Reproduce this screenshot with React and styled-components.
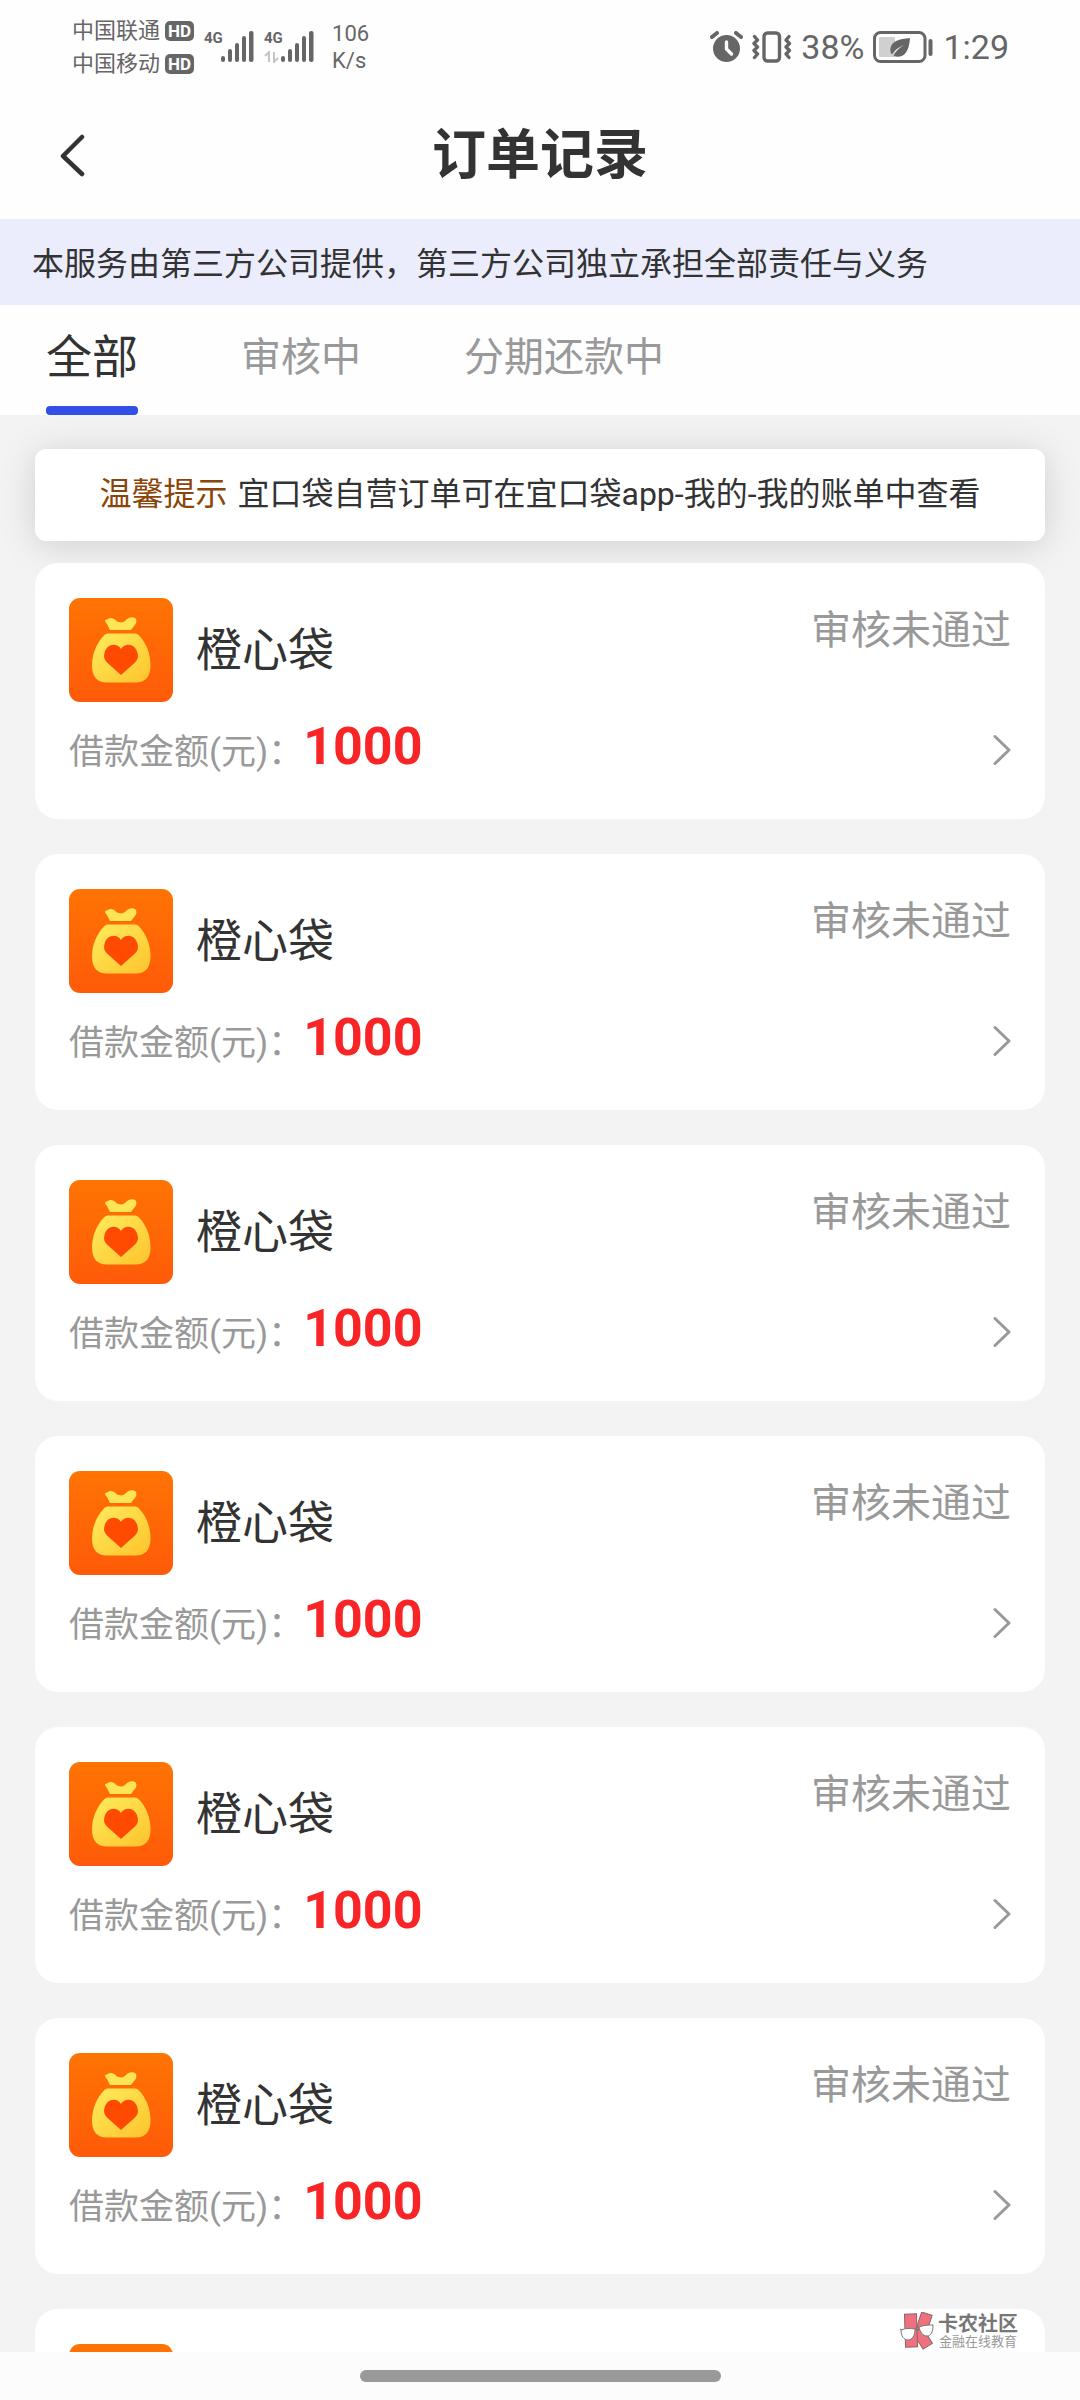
import React, { useState } from "react";
import styled, { createGlobalStyle } from "styled-components";

const color = {
    text: "#333333",
    muted: "#999999",
    system: "#666666",
    page: "#f3f3f3",
    notice: "#ebedfd",
    accent: "#3350e6",
    amount: "#f92426",
    tip: "#8a4508",
};

const size = {
    xs: "13px",
    s: "22px",
    m: "32px",
    label: "35px",
    l: "40px",
    xl: "46px",
    amount: "52px",
    title: "54px",
};

const GlobalStyle = createGlobalStyle`
    * {
        box-sizing: border-box;
    }
    body {
        margin: 0;
        background-color: ${color.page};
        color: ${color.text};
        font-family: Roboto, "Noto Sans CJK SC", sans-serif;
    }
    button {
        padding: 0;
        border: none;
        background: none;
        font-family: inherit;
        cursor: pointer;
    }
`;

const Screen = styled.div`
    position: relative;
    display: flex;
    flex-direction: column;
    height: 100vh;
`;

const Top = styled.div`
    background-color: #fefefe;
`;

const StatusBar = styled.div`
    display: flex;
    justify-content: space-between;
    align-items: center;
    height: 92px;
    padding: 2px 71px 0 72px;
    color: ${color.system};
`;

const StatusGroup = styled.div`
    display: flex;
    align-items: center;
    gap: ${(props) => props.$gap}px;
`;

const Carriers = styled.div`
    display: flex;
    flex-direction: column;
`;

const Carrier = styled.div`
    display: flex;
    align-items: center;
    gap: 5px;
    font-size: ${size.s};
    line-height: 33px;
`;

const HdBadge = styled.span`
    width: 29px;
    height: 20px;
    border-radius: 5px;
    background-color: ${color.system};
    color: #fff;
    font-size: 17px;
    font-weight: 700;
    line-height: 20px;
    text-align: center;
`;

const SignalBox = styled.div`
    display: flex;
    height: 32px;
`;

const SignalLabel = styled.div`
    display: flex;
    flex-direction: column;
    justify-content: space-between;
    width: 17px;
    font-size: 15px;
    font-weight: 700;
    line-height: 14px;
`;

const Speed = styled.div`
    margin-left: 8px;
    font-size: ${size.s};
    line-height: 27px;
`;

const Clock = styled.span`
    font-size: 34px;
    line-height: 40px;
`;

const TitleBar = styled.header`
    display: grid;
    grid-template-columns: 92px 1fr 92px;
    align-items: center;
    height: 127px;
`;

const BackButton = styled.button`
    display: flex;
    justify-content: flex-end;
    padding-right: 6px;
`;

const Title = styled.h1`
    margin: 0;
    font-size: ${size.title};
    line-height: 72px;
    font-weight: 700;
    text-align: center;
`;

const Notice = styled.p`
    margin: 0;
    padding: 23px 32px 19px;
    background-color: ${color.notice};
    font-size: ${size.m};
    line-height: 44px;
    white-space: nowrap;
`;

const Tabs = styled.nav`
    display: flex;
    gap: 103px;
    padding: 0 46px;
`;

const Tab = styled.button`
    padding-top: 4px;
    color: ${(props) => (props.$active ? color.text : color.muted)};
    font-size: ${(props) => (props.$active ? size.xl : size.l)};
    line-height: 97px;

    &::after {
        content: "";
        display: block;
        height: 9px;
        border-radius: 4px;
        background-color: ${(props) => (props.$active ? color.accent : "transparent")};
    }
`;

const List = styled.main`
    flex: 1;
    min-height: 0;
    overflow-y: auto;
    scrollbar-width: none;
    padding: 34px 35px 0;
`;

const Tip = styled.p`
    display: flex;
    justify-content: center;
    gap: 10px;
    margin: 0 0 22px;
    padding: 23px 0 25px;
    border-radius: 11px;
    background-color: #fff;
    box-shadow: 0 4px 36px rgba(0, 0, 0, 0.15);
    font-size: ${size.m};
    line-height: 44px;
    white-space: nowrap;
`;

const TipLabel = styled.span`
    color: ${color.tip};
`;

const Orders = styled.div`
    display: flex;
    flex-direction: column;
    gap: 35px;
    position: relative;
`;

const Card = styled.a`
    display: block;
    padding: 35px 34px 39px;
    border-radius: 23px;
    background-color: #fff;
    color: ${color.text};
    text-decoration: none;
`;

const CardHead = styled.div`
    display: flex;
    align-items: center;
    gap: 23px;
    margin-bottom: 18px;
`;

const Name = styled.span`
    flex: 1;
    font-size: ${size.xl};
    line-height: 64px;
`;

const State = styled.span`
    align-self: flex-start;
    color: ${color.muted};
    font-size: ${size.l};
    line-height: 66px;
`;

const CardFoot = styled.div`
    display: flex;
    justify-content: space-between;
    align-items: center;
    height: 60px;
`;

const AmountLine = styled.div`
    display: flex;
    align-items: baseline;
    line-height: 60px;
`;

const AmountLabel = styled.span`
    color: ${color.muted};
    font-size: ${size.label};
`;

const Amount = styled.strong`
    color: ${color.amount};
    font-size: ${size.amount};
    font-weight: 700;
`;

const GestureBar = styled.div`
    display: flex;
    justify-content: center;
    align-items: center;
    height: 48px;
    background-color: #fcfcfc;
`;

const Pill = styled.div`
    width: 361px;
    height: 12px;
    border-radius: 6px;
    background-color: #999;
`;

const Watermark = styled.div`
    position: absolute;
    right: 62px;
    bottom: 50px;
    display: flex;
    align-items: center;
    gap: 3px;
    color: #777;
`;

const WatermarkText = styled.div`
    display: flex;
    flex-direction: column;
    font-size: 20px;
    font-weight: 700;
    line-height: 22px;
`;

const WatermarkSub = styled.small`
    color: ${color.muted};
    font-size: ${size.xs};
    font-weight: 400;
    line-height: 14px;
    text-align: center;
`;

const Signal = ({ data }) => (
    <SignalBox>
        <SignalLabel>
            4G
            {data && (
                <svg width="16" height="12" viewBox="0 0 16 12" fill="none" stroke="#c4c4c4" strokeWidth="2">
                    <path d="M1 5l4-4v10M10 1v10l4-4" />
                </svg>
            )}
        </SignalLabel>
        <svg width="33" height="31" viewBox="0 0 33 31" fill={color.system}>
            <rect x="0" y="25" width="4" height="6" rx="2" />
            <rect x="7" y="18" width="4" height="13" rx="2" />
            <rect x="14" y="12" width="4" height="19" rx="2" />
            <rect x="21" y="5" width="4" height="26" rx="2" />
            <rect x="28" y="0" width="4.5" height="31" rx="2" />
        </svg>
    </SignalBox>
);

const AlarmIcon = () => (
    <svg width="33" height="32" viewBox="0 0 33 32" fill="none" strokeLinecap="round">
        <circle cx="16.5" cy="17.5" r="13.5" fill={color.system} />
        <path d="M2 6l5-4M31 6l-5-4" stroke={color.system} strokeWidth="4" />
        <path d="M16.5 11v7l5 5" stroke="#fff" strokeWidth="3.4" strokeLinejoin="round" />
    </svg>
);

const VibrateIcon = () => (
    <svg width="40" height="32" viewBox="0 0 40 32" fill="none" stroke={color.system} strokeLinecap="round" strokeLinejoin="round">
        <rect x="12" y="2" width="15.5" height="28" rx="3.5" strokeWidth="3.4" />
        <path d="M2.5 5.500l3 3.500-3.500 3.500 3.500 3.500-3.500 3.500 3.500 3.500-3 3.500" strokeWidth="3.400" />
        <path d="M37 5.500l-3 3.500 3.500 3.500-3.500 3.500 3.500 3.500-3.500 3.500 3 3.500" strokeWidth="3.400" />
    </svg>
);

const BatteryIcon = () => (
    <svg width="61" height="32" viewBox="0 0 61 32">
        <rect x="1.500" y="1.500" width="50.500" height="29" rx="6" fill="none" stroke={color.system} strokeWidth="3" />
        <rect x="6" y="6" width="16" height="20" rx="1" fill="#d0d0d0" />
        <path d="M37 7c-11 1-18 3-19.500 10-.6 3 .2 5 1.500 6.500 3-5 7-7.500 12-9.500-5 3-8.500 6-10.500 11 8 2.500 15.500-1 16.500-18z" fill={color.system} />
        <rect x="55.500" y="8" width="4" height="17" rx="2" fill={color.system} />
    </svg>
);

const BackIcon = () => (
    <svg width="26" height="46" viewBox="0 0 26 46" fill="none" stroke={color.text} strokeWidth="4.500" strokeLinecap="round" strokeLinejoin="round">
        <path d="M22 4L3 23l19 18" />
    </svg>
);

const ArrowIcon = () => (
    <svg width="18" height="32" viewBox="0 0 18 32" fill="none" stroke={color.muted} strokeWidth="3" strokeLinecap="round" strokeLinejoin="round">
        <path d="M2 2.500l14 13.500L2 29.500" />
    </svg>
);

const BagIcon = () => (
    <svg width="104" height="104" viewBox="0 0 104 104">
        <defs>
            <linearGradient id="tile" x1="0" y1="0" x2="0" y2="1">
                <stop offset="0" stopColor="#ff7403" />
                <stop offset="1" stopColor="#ff5a09" />
            </linearGradient>
            <linearGradient id="bag" x1="0" y1="0" x2="1" y2="1">
                <stop offset="0" stopColor="#ffec5c" />
                <stop offset="1" stopColor="#fec32c" />
            </linearGradient>
        </defs>
        <rect width="104" height="104" rx="11" fill="url(#tile)" />
        <path d="M36 22c2 0 3-2 6-2 4 0 5 4 8 4 3 1 5 0 7-2 2-3 8-4 10-1 1 3 0 5-2 7l-3 4H41l-3-6c-1-1-2-2-2-4z" fill="#fee556" />
        <path d="M39 35.500h27c2 0 3 1 4 2 7 7 11.500 18 11.500 30 0 11-5 17-15 17H38c-10 0-15-6-15-17 0-12 5-23 12-30 1-1 2-2 4-2z" fill="url(#bag)" />
        <path d="M52 77L38 64.500c-3-3-3.500-6-2.500-9.500 2-9 12-11 16.500-4 4.500-7 14.500-5 16.500 4 1 3.500.5 6.500-2.500 9.500z" fill="#ff4a02" />
    </svg>
);

// red logo mark wearing a pair of glasses
const MarkIcon = () => (
    <svg width="36" height="38" viewBox="0 0 36 38">
        <g fill="#f0717e" stroke="#8a6468" strokeWidth="1">
            <rect x="19" y="1" width="11" height="21" transform="rotate(18 24 12)" />
            <rect x="18" y="17" width="11" height="19" transform="rotate(-32 23 26)" />
            <rect x="6" y="2" width="12" height="33" transform="rotate(-2 12 18)" />
        </g>
        <g fill="#fff" stroke="#777" strokeWidth="1">
            <path d="M2 18c5-2 9-2 14-1 0 7-3 11-7 11s-7-4-7-10z" />
            <path d="M20 15c5-2 9-2 14-2 0 7-2 11-6 11s-7-4-8-9z" />
            <path d="M1 17l2 1M16 17c1-2 3-2 4-2" fill="none" />
        </g>
    </svg>
);

const tabs = ["全部", "审核中", "分期还款中"];

const orders = Array.from({ length: 6 }, (_, i) => ({
    id: i + 1,
    name: "橙心袋",
    state: "审核未通过",
    amount: 1000,
}));

const OrderCard = ({ order }) => (
    <Card href={`#order-${order.id}`}>
        <CardHead>
            <BagIcon />
            <Name>{order.name}</Name>
            <State>{order.state}</State>
        </CardHead>
        <CardFoot>
            <AmountLine>
                <AmountLabel>借款金额(元)：</AmountLabel>
                <Amount>{order.amount}</Amount>
            </AmountLine>
            <ArrowIcon />
        </CardFoot>
    </Card>
);

const PendingCard = () => (
    <Card as="div">
        <CardHead>
            <BagIcon />
        </CardHead>
        <CardFoot />
    </Card>
);

const App = () => {
    const [active, setActive] = useState(tabs[0]);

    return (
        <Screen>
            <GlobalStyle />
            <Top>
                <StatusBar>
                    <StatusGroup $gap={10}>
                        <Carriers>
                            <Carrier>
                                中国联通<HdBadge>HD</HdBadge>
                            </Carrier>
                            <Carrier>
                                中国移动<HdBadge>HD</HdBadge>
                            </Carrier>
                        </Carriers>
                        <Signal />
                        <Signal data />
                        <Speed>
                            106
                            <br />
                            K/s
                        </Speed>
                    </StatusGroup>
                    <StatusGroup $gap={9}>
                        <AlarmIcon />
                        <VibrateIcon />
                        <Clock>38%</Clock>
                        <BatteryIcon />
                        <Clock>1:29</Clock>
                    </StatusGroup>
                </StatusBar>
                <TitleBar>
                    <BackButton aria-label="返回">
                        <BackIcon />
                    </BackButton>
                    <Title>订单记录</Title>
                </TitleBar>
                <Notice>本服务由第三方公司提供，第三方公司独立承担全部责任与义务</Notice>
                <Tabs>
                    {tabs.map((tab) => (
                        <Tab key={tab} $active={tab === active} onClick={() => setActive(tab)}>
                            {tab}
                        </Tab>
                    ))}
                </Tabs>
            </Top>
            <List>
                <Tip>
                    <TipLabel>温馨提示</TipLabel>
                    <span>宜口袋自营订单可在宜口袋app-我的-我的账单中查看</span>
                </Tip>
                <Orders>
                    {orders.map((order) => (
                        <OrderCard key={order.id} order={order} />
                    ))}
                    <PendingCard />
                </Orders>
            </List>
            <GestureBar>
                <Pill />
            </GestureBar>
            <Watermark>
                <MarkIcon />
                <WatermarkText>
                    卡农社区
                    <WatermarkSub>金融在线教育</WatermarkSub>
                </WatermarkText>
            </Watermark>
        </Screen>
    );
};

export default App;
